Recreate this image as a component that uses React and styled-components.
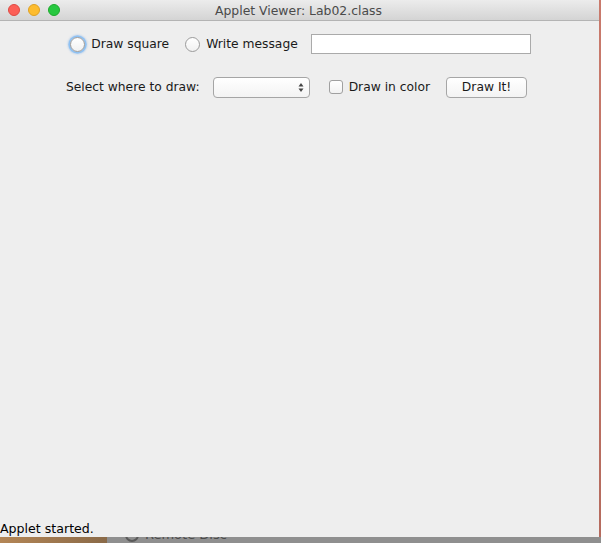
import { useState } from "react";
import styled, { createGlobalStyle } from "styled-components";

const GlobalStyle = createGlobalStyle`
  html, body {
    margin: 0;
    padding: 0;
    background: #8e8e8e;
  }
  body {
    font-family: "Lucida Grande", "DejaVu Sans", sans-serif;
  }
`;

const Desktop = styled.div`
  width: 601px;
  height: 543px;
  overflow: hidden;
  display: flex;
  flex-direction: column;
  background: #8e8e8e;
`;

const Upper = styled.div`
  display: flex;
  height: 537px;
`;

const EdgeStrip = styled.div`
  flex: 1;
  background: linear-gradient(to bottom, #c97a6c, #b56b5e);
`;

const Window = styled.div`
  width: 599px;
  height: 537px;
  display: flex;
  flex-direction: column;
  background: #eeeeee;
  box-shadow: 0 1px 2px rgba(0, 0, 0, 0.5);
`;

const TitleBar = styled.div`
  height: 20px;
  display: flex;
  align-items: center;
  padding: 0 8px;
  background: linear-gradient(to bottom, #ececec, #d4d4d4);
  border-bottom: 1px solid #b4b4b4;
`;

const Lights = styled.div`
  display: flex;
  gap: 8px;
`;

const Light = styled.span`
  width: 12px;
  height: 12px;
  border-radius: 50%;
  box-sizing: border-box;
  background: ${(p) => p.color};
  border: 1px solid ${(p) => p.edge};
`;

const Title = styled.div`
  flex: 1;
  text-align: center;
  font-size: 12.4px;
  color: #4a4a4a;
  margin-right: 52px;
  margin-left: -2px;
`;

const Content = styled.div`
  flex: 1;
  display: flex;
  flex-direction: column;
`;

const Row = styled.div`
  display: flex;
  align-items: center;
  justify-content: center;
  height: ${(p) => p.h}px;
  padding-left: ${(p) => p.pl || 0}px;
  padding-right: ${(p) => p.pr || 0}px;
  font-size: 12.3px;
  color: #1a1a1a;
`;

const Radio = styled.span`
  width: 15px;
  height: 15px;
  box-sizing: border-box;
  border-radius: 50%;
  border: 1px solid #9b9b9b;
  background: linear-gradient(to bottom, #ffffff, #f1f1f1);
  box-shadow: ${(p) =>
    p.focused ? "0 0 0 1.5px #8ec1f3, 0 0 2px 2px rgba(110, 170, 235, 0.6)" : "none"};
  margin-right: 6px;
`;

const Label = styled.span`
  margin-right: ${(p) => p.mr || 0}px;
  white-space: nowrap;
`;

const TextField = styled.input`
  width: 220px;
  height: 20px;
  box-sizing: border-box;
  border: 1px solid #aaaaaa;
  background: #ffffff;
  margin: 0;
  padding: 0 3px;
  outline: none;
`;

const Combo = styled.div`
  width: 97px;
  height: 21px;
  box-sizing: border-box;
  border: 1px solid #a5a5a5;
  border-radius: 4px;
  background: linear-gradient(to bottom, #ffffff, #f3f3f3);
  display: flex;
  align-items: center;
  justify-content: flex-end;
  padding-right: 5px;
  margin-right: 19px;
`;

const Check = styled.span`
  width: 14px;
  height: 14px;
  box-sizing: border-box;
  border: 1px solid #a0a0a0;
  border-radius: 3px;
  background: linear-gradient(to bottom, #ffffff, #f2f2f2);
  margin-right: 6px;
`;

const Button = styled.button`
  width: 81px;
  height: 21px;
  box-sizing: border-box;
  border: 1px solid #a6a6a6;
  border-radius: 4px;
  background: linear-gradient(to bottom, #ffffff, #f3f3f3);
  font-family: inherit;
  font-size: 12.3px;
  color: #1a1a1a;
  padding: 0;
  margin-left: 16px;
`;

const Spacer = styled.div`
  flex: 1;
`;

const Status = styled.div`
  font-size: 12.6px;
  color: #000000;
  height: 16px;
  line-height: 16px;
`;

const Lower = styled.div`
  display: flex;
  height: 6px;
  overflow: hidden;
`;

const Brown = styled.div`
  width: 107px;
  background: linear-gradient(to right, #b48656, #8a6a48);
`;

const Dock = styled.div`
  flex: 1;
  display: flex;
  align-items: flex-start;
  background: #8f8f8f;
  padding-left: 18px;
  font-size: 13px;
  color: #4b4b4b;
`;

const DockText = styled.div`
  margin-top: -10px;
  display: flex;
  align-items: center;
  gap: 6px;
`;

const DiscIcon = styled.span`
  width: 14px;
  height: 14px;
  border-radius: 50%;
  border: 2px solid #5a5a5a;
  box-sizing: border-box;
`;

export default function App() {
  const [msg, setMsg] = useState("");

  return (
    <>
      <GlobalStyle />
      <Desktop>
        <Upper>
          <Window>
            <TitleBar>
              <Lights>
                <Light color="#fc5f57" edge="#de4a43" />
                <Light color="#fdbc2e" edge="#dea123" />
                <Light color="#27c840" edge="#1daa2c" />
              </Lights>
              <Title>Applet Viewer: Lab02.class</Title>
            </TitleBar>
            <Content>
              <Row h={46} pl={2}>
                <Radio focused />
                <Label mr={16}>Draw square</Label>
                <Radio />
                <Label mr={13}>Write message</Label>
                <TextField value={msg} onChange={(e) => setMsg(e.target.value)} />
              </Row>
              <Row h={40} pr={6}>
                <Label mr={13}>Select where to draw:</Label>
                <Combo>
                  <svg width="6" height="11" viewBox="0 0 6 11">
                    <path d="M3 1 L5.5 4.5 H0.5 Z" fill="#444" />
                    <path d="M3 10 L5.5 6.5 H0.5 Z" fill="#444" />
                  </svg>
                </Combo>
                <Check />
                <Label>Draw in color</Label>
                <Button>Draw It!</Button>
              </Row>
              <Spacer />
              <Status>Applet started.</Status>
            </Content>
          </Window>
          <EdgeStrip />
        </Upper>
        <Lower>
          <Brown />
          <Dock>
            <DockText>
              <DiscIcon />
              <span>Remote Disc</span>
            </DockText>
          </Dock>
        </Lower>
      </Desktop>
    </>
  );
}
